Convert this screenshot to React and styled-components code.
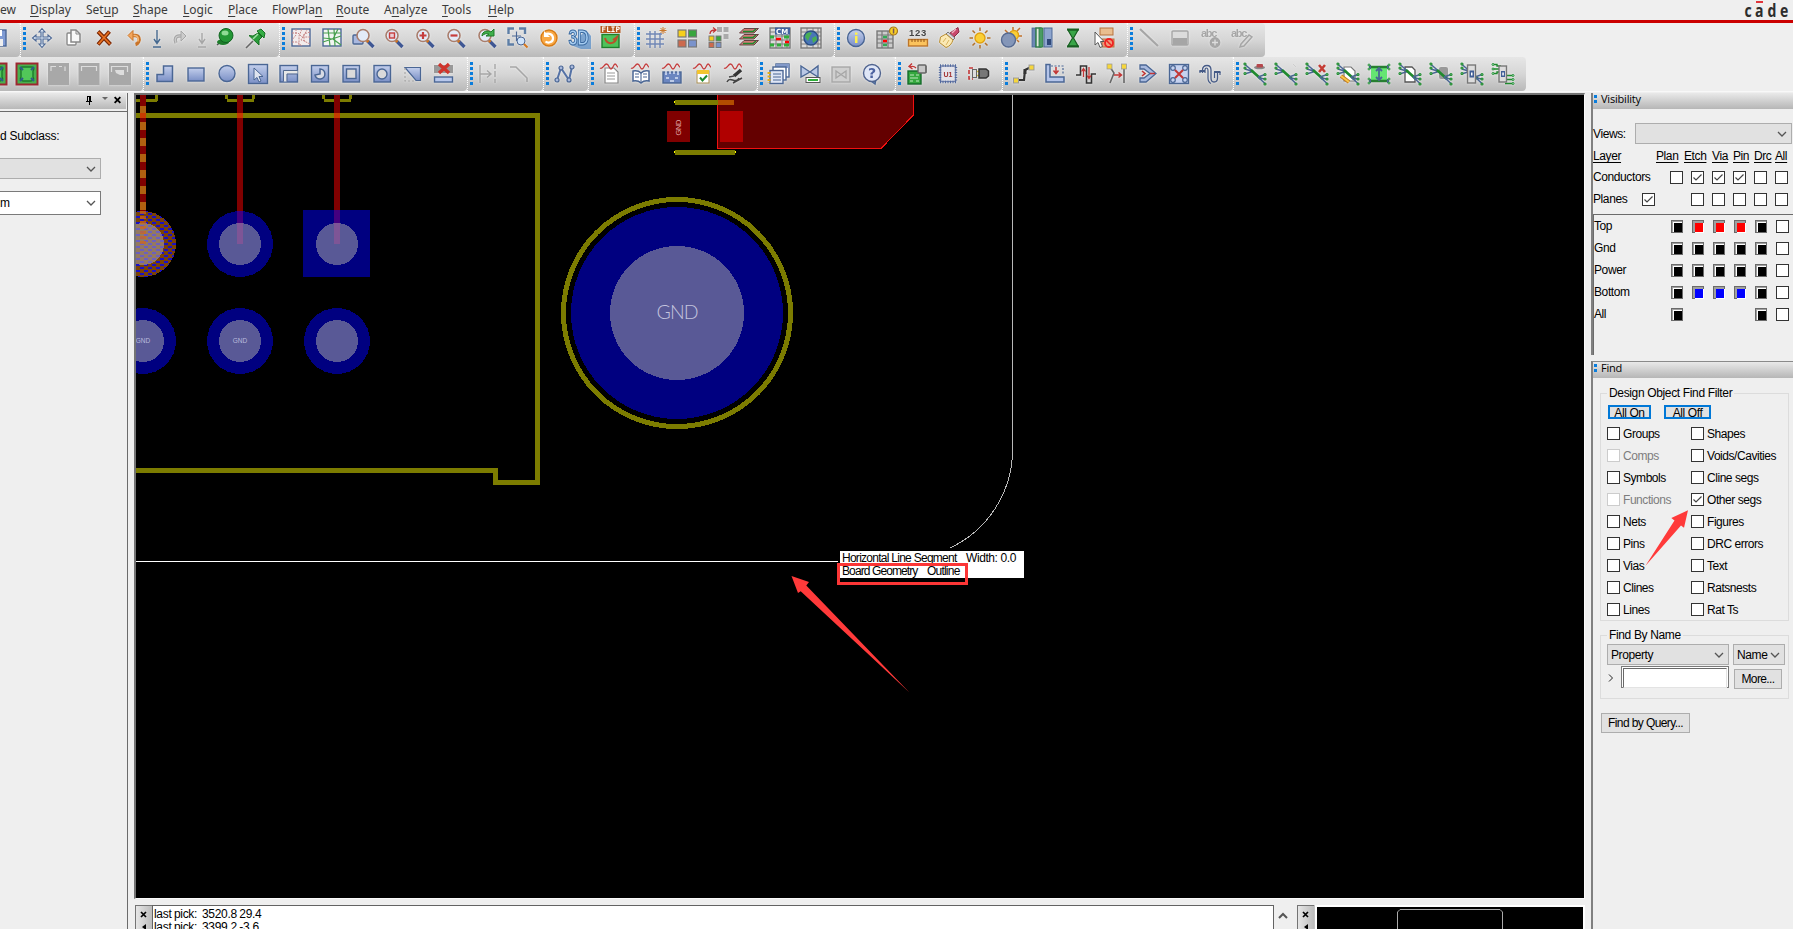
import React from "react";
import styled, { createGlobalStyle } from "styled-components";

const Global = createGlobalStyle`
  body { margin: 0; background: #efefef; overflow: hidden; }
  * { box-sizing: border-box; }
`;

const Page = styled.div`
  width: 1793px; height: 929px; overflow: hidden; background: #efefef;
  display: flex; flex-direction: column;
  font-family: "Liberation Sans", Arial, sans-serif; font-size: 12px; letter-spacing: -0.4px; color: #000;
`;
const MenuBar = styled.header`
  height: 23px; flex: none; display: flex; align-items: flex-start; border-bottom: 3px solid #cb0000;
  font-family: "Noto Sans", "Open Sans", sans-serif; font-size: 12px; letter-spacing: 0; color: #3b3b3b;
`;
const MenuItem = styled.span`
  flex: none; width: ${(p) => p.$w}px; margin-right: 14px; line-height: 20px; white-space: nowrap;
  u { text-underline-offset: 2px; text-decoration-thickness: 1px; }
`;
const Brand = styled.div`
  margin-left: auto; width: 49px; height: 20px; flex: none;
  svg { display: block; }
`;
const ToolRow = styled.div`
  height: ${(p) => p.$h}px; flex: none; display: flex; margin-left: ${(p) => p.$shift}px;
`;
const Group = styled.div`
  flex: none; height: 100%; display: flex; align-items: flex-start; padding: ${(p) => p.$top}px 8px 0 2px;
  border-left: 1px dotted #fff; border-radius: 0 4px 4px 0;
  background: linear-gradient(#e6e6e6, #d6d6d6 50%, #b9b9b9);
`;
const Grip = styled.i`
  width: 3px; height: 23px; margin-top: ${(p) => p.$top}px; flex: none;
  background: repeating-linear-gradient(#0a7ddc 0 3px, transparent 3px 5px);
`;
const Tool = styled.span`
  flex: none; width: ${(p) => (p.$narrow ? 14 : 31)}px; height: 24px; display: flex; justify-content: center; align-items: center;
  svg { flex: none; display: block; overflow: visible; filter: drop-shadow(0 0 1px rgba(255,255,255,.6)); }
`;
const Body = styled.main`
  flex: 1; min-height: 0; display: flex; border-top: 1px solid #f8f8f8; padding-top: 1px;
`;
const LeftPanel = styled.aside`
  width: 128px; flex: none; border-right: 1px solid #6b6b6b; display: flex; flex-direction: column;
`;
const LeftHead = styled.div`
  height: 16px; margin-right: 1px; flex: none; background: linear-gradient(#e9e9e9, #b8b8b8);
  display: flex; justify-content: flex-end; align-items: center; padding: 0 4px 2px 0;
`;
const LeftBody = styled.div`
  flex: 1; margin-top: 2px; border-top: 1px solid #6b6b6b; padding-top: 17px;
`;
const Caption = styled.div`height: 15px; line-height: 15px; margin-bottom: 14px; white-space: nowrap; text-align: right; width: 51px; letter-spacing: -0.25px;`;
const Combo = styled.div`
  width: ${(p) => p.$w}px; height: ${(p) => p.$h}px; flex: none;
  border: 1px solid ${(p) => (p.$white ? "#7a7a7a" : "#adadad")};
  background: ${(p) => (p.$white ? "#fff" : "#e1e1e1")};
  display: flex; align-items: center; justify-content: space-between; padding: 0 4px 0 3px;
  margin-left: ${(p) => p.$ml || 0}px; margin-bottom: ${(p) => p.$mb || 0}px;
`;
const Center = styled.section`width: 1451px; margin-left: 6px; flex: none; display: flex; flex-direction: column;`;
const CanvasFrame = styled.div`
  height: 806px; flex: none; border-style: solid; border-width: 2px 1px 1px 2px; border-color: #747474 #fbfbfb #fbfbfb #747474; background: #000;
  svg { display: block; }
`;
const Bottom = styled.div`flex: 1; margin-top: 6px; margin-left: 1px; display: flex; overflow: hidden;`;
const Strip = styled.div`
  width: 17px; flex: none; background: linear-gradient(90deg, #e6e6e6, #bcbcbc); border-top: 1px solid #747474; border-left: 1px solid #747474;
  svg { display: block; }
`;
const Log = styled.div`
  width: 1122px; flex: none; background: #fff; border: 1px solid #636363; border-width: 1px 1px 0 1px;
  padding: 2px 1px; line-height: 12.5px; font-size: 12px; white-space: pre; letter-spacing: -0.3px; word-spacing: -0.6px;
`;
const Scroll = styled.div`width: 23px; padding: 4px 0 0 4px; flex: none;`;
const Mini = styled.div`
  flex: none; width: 270px; margin-left: 1px; border: solid #fff; border-width: 2px 2px 0 2px; outline: 1px solid #c4c4c4; background: #000;
  svg { display: block; }
`;
const Right = styled.aside`flex: 1; margin-left: 6px; display: flex; flex-direction: column;`;
const Dock = styled.section`
  border-left: 2px solid #808080; height: ${(p) => p.$h}px; flex: none; margin-bottom: ${(p) => p.$mb || 0}px;
  border-top: ${(p) => (p.$line ? "1px solid #8a8a8a" : "none")};
`;
const DockHead = styled.div`
  height: 16px; background: linear-gradient(#e9e9e9, #b6b6b6); display: flex; align-items: flex-start; margin-bottom: ${(p) => p.$mb || 0}px;
  font-family: "Open Sans", "Noto Sans", sans-serif; font-size: 11px; letter-spacing: -0.2px; line-height: 12px; padding-left: 1px; overflow: hidden;
  svg { margin: 3px -7px 0 auto; flex: none; }
`;
const Dots = styled.i`
  width: 3px; height: 8px; margin: 2px 4px 0 0; flex: none;
  background: repeating-linear-gradient(#0a7ddc 0 3px, transparent 3px 5px);
`;
const ViewsRow = styled.div`display: flex; align-items: center; height: 21px; margin-top: 14px;`;
const ViewsLabel = styled.span`width: 42px; line-height: 14px;`;
const HeadRow = styled.div`
  display: grid; grid-template-columns: 63px 28px 28px 21px 21px 21px 20px; height: 15px; line-height: 16px; margin: 4px 0 3px 0;
  text-decoration: underline; text-underline-offset: 2px; white-space: nowrap;
`;
const CheckRow = styled.div`
  display: grid; grid-template-columns: ${(p) => p.$cols}; height: 22px; align-items: center; white-space: nowrap;
`;
const Layers = styled.div`
  margin-top: 4px; border-top: 1px solid #6b6b6b; border-left: 1px solid #6b6b6b; height: 141px;
`;
const Check = styled.span`
  width: 13px; height: 13px; flex: none; background: #fff; border: 1px solid ${(p) => (p.$off ? "#ccc" : "#333")};
  display: block;
  svg { display: block; }
`;
const Swatch = styled.span`
  width: 12px; height: 13px; border: 1px solid #6a6a6a; background: #a0a0a0; padding: 1px; margin-left: -1px;
  &::before { content: ""; display: block; width: 8px; height: 9px; border-left: 1px solid #fff; border-top: 1px solid #fff; background: #000; }
  ${(p) => p.$c && `
    padding: 2px 0 0 2px;
    &::before { width: 8px; height: 9px; border: 1px solid #fff; border-left: 0; border-top: 0; background: ${p.$c}; }
  `}
`;
const Box = styled.fieldset`
  border: 1px solid #dcdcdc; margin: ${(p) => p.$mt}px 0 0 7px; padding: 0; width: 189px; height: ${(p) => p.$h}px; min-width: 0;
`;
const Legend = styled.legend`padding: 0 2px; margin-left: 6px; line-height: 14px; height: 14px; white-space: nowrap; letter-spacing: -0.35px;`;
const Buttons = styled.div`display: flex; gap: 13px; margin: 5px 0 8px 7px;`;
const BlueButton = styled.span`
  width: ${(p) => p.$w}px; height: 14px; border: 2px solid #0078d7; background: #e1e1e1; line-height: 13px; text-align: center; overflow: hidden; white-space: nowrap;
`;
const Filters = styled.div`display: grid; grid-template-columns: 84px 1fr; grid-auto-rows: 22px; margin-left: 6px;`;
const Filter = styled.label`
  display: flex; align-items: flex-start; gap: 3px; line-height: 14px; white-space: nowrap; letter-spacing: -0.45px;
  color: ${(p) => (p.$off ? "#7d7d7d" : "#000")};
`;
const NameRow = styled.div`display: flex; align-items: flex-start; padding-left: 6px; margin-top: ${(p) => p.$mt}px;`;
const Prompt = styled.span`
  width: 14px; padding: 8px 0 0 1px;
  svg { display: block; }
`;
const Field = styled.span`width: 108px; height: 22px; background: #fff; border: 1px solid #7a7a7a; padding: 1px; margin-right: 5px;
  &::before { content: ""; display: block; height: 100%; border: 1px solid #e3e3e3; border-left-color: #696969; border-top-color: #696969; }
`;
const Button = styled.span`
  display: block; width: ${(p) => p.$w}px; height: 20px; margin: ${(p) => p.$m || 0}; border: 1px solid #adadad; background: #e1e1e1;
  text-align: center; line-height: 19px; white-space: nowrap; letter-spacing: -0.6px;
`;

/* ---------- icon helpers ---------- */
const B = "#4a6694", L = "#9fb2dc", G = "#1f8a2d", GY = "#a6a6a6", R = "#c23636", O = "#d5761d", K = "#444";
const P = ({ d, s = B, f = "none", w = 1.5, ...r }) => <path d={d} stroke={s} fill={f} strokeWidth={w} {...r} />;
const Rc = ({ x, y, w, h, f = L, s = "none", sw = 1.4, rx = 0 }) => <rect x={x} y={y} width={w} height={h} fill={f} stroke={s} strokeWidth={sw} rx={rx} />;
const Ci = ({ x, y, r, f = L, s = B, w = 1.4 }) => <circle cx={x} cy={y} r={r} fill={f} stroke={s} strokeWidth={w} />;
const T = ({ x, y, z = 8, f = K, children, ff = "DejaVu Sans" }) => <text x={x} y={y} fontSize={z} fill={f} fontWeight="bold" letterSpacing="0" fontFamily={ff}>{children}</text>;
const Wave = ({ y = 0 }) => <P d={`M1 ${5 + y}C4 ${7 + y} 5 ${1 + y} 7.500 ${1 + y}S10 ${6 + y} 12 ${6 + y}S14.500 ${1 + y} 16 ${1 + y}S18 ${4 + y} 19 ${4 + y}`} s="#c43c3c" w={1.3} />;
const Zoomer = ({ children }) => <g><P d="M13.500 14L19.500 20" s="#3f5794" w={3.4} /><P d="M12.500 13L14.500 15" s={O} w={2.6} /><Ci x={9} y={8.500} r={6} f="#e3ebf8" s="#a87d6c" w={1.6} />{children}</g>;
const Cell = ({ s = 1 }) => <g><Rc x={1} y={1} w={20} h={20} f="#dadada" s="#777" /><path d="M1 5H21M1 9H21M1 13H21M1 17H21M7 1V21M13 1V21M18 1V21" stroke="#777" strokeWidth={s} /></g>;
const Ends = () => <g><P d="M1 1.500L9 8.500L2 10.500M9 8.500L1 6" s={B} w={1.5} /><P d="M7 7L17 16" s={G} w={2.6} /><P d="M14 14L21 11.500M15 15L21 16M14 14L21 20.500" s={B} w={1.5} />
  {[[1, 1], [1, 5], [1, 10.500], [21, 11.500], [21, 16], [21, 21]].map(([x, y]) => <Ci key={`${x}${y}`} x={x} y={y} r={1} f="#cfe" s={G} w={1.200} />)}</g>;
const Sq = () => <Rc x={1.500} y={1.500} w={19} h={19} f="url(#bl)" s={B} />;

const icons = {
  save: <g><Rc x={3} y={3} w={17} h={16} f="#7f9bd4" s={B} /><Rc x={7} y={3} w={9} h={6} f="#fff" /><Rc x={6} y={12} w={11} h={7} f="#eee" /></g>,
  move: <P d="M11 1.500L14 5H12V10H17V8L20.500 11L17 14V12H12V17H14L11 20.500L8 17H10V12H5V14L1.500 11L5 8V10H10V5H8Z" f="#dde8f6" w={1.1} />,
  copy: <g><Rc x={5} y={6} w={9} h={12} f="#fff" s="#888" rx={1} /><P d="M9 3H14L18 7V15H9Z" s="#888" f="#f8f8f8" /><P d="M14 3V7H18" s="#888" w={1} /></g>,
  del: <g><P d="M5 4.500L17.500 17.500M16.500 4.500L5 17.500" s="#7c2a08" w={4} /><P d="M5.500 5L17 17M16 5L5.500 17" s="#e8701f" w={1.8} /></g>,
  undo: <g><P d="M6 8.500H11C15 8.500 16 12 14.500 15Q13.500 17 11.500 17.500" s="#c87328" w={3.4} /><P d="M6 8.500H11C14 8.500 15 12 13.500 14.500" s="#f5b877" w={1.6} /><P d="M9 3.500L4 8.500L9 13.500Z" s="#c87328" f="#f3a65d" w={1} /></g>,
  down: <g><P d="M7 3V16M4 12L7 16.500L10 12" s="#46698f" w={1.4} /><P d="M3 20H11" s="#46698f" /></g>,
  downG: <g><P d="M7 6V16M4 12L7 16.500L10 12" s={GY} w={1.4} /><P d="M3 20H11" s={GY} /></g>,
  redo: <g><P d="M7 16C5 12 7 9 10 9H14" s={GY} w={3.4} /><P d="M7 16C5 12 7 9 10 9H14" s="#ccc" w={1.2} /><P d="M12 4L17 9L12 14Z" s={GY} f="#ccc" w={1} /></g>,
  ball: <g><P d="M9 13L3 18" s="#555" w={1.5} /><ellipse cx="9" cy="15" rx="6" ry="3" fill="#1d7d2b" /><Ci x={12} y={8.500} r={7} f="#239735" s="#116020" w={1} /><ellipse cx="11" cy="6" rx="3.500" ry="2.500" fill="#8fdb95" /></g>,
  pin: <g><P d="M8 14L1 21" s="#666" w={1.6} /><P d="M12 4L19 11L20 6L16 2Z" s="#176f22" f="#34ad44" w={1} /><P d="M13 6L8 9L4 8.500L14 18L14 13L17 10Z" s="#176f22" f="#2a9d3a" w={1} /><P d="M13 7L8 12" s="#9fe0a5" /></g>,
  gridR: <g><Rc x={2} y={2} w={18} h={17} f="#f3ecec" s={B} /><P d="M2 6H8L12 10H20M6 2V8L2 13M12 2L9 9V19M20 5L14 7V14L20 17M2 15H7L12 19M15 14L11 13L17 3" s="#c78787" w={1} strokeDasharray="2 1" /></g>,
  gridG: <g><Rc x={2} y={2} w={18} h={17} f="#f1f5f1" s={B} /><P d="M2 6H20M2 15L20 9M7 2L9 19M17 2L12 12L20 18M2 11L12 12M13 2L14 19" s="#48a04e" w={1.2} /></g>,
  zFit: <g><Rc x={1} y={8} w={10} h={9} f="#a9b8df" s={B} rx={1} /><g transform="translate(2)"><Zoomer /></g></g>,
  zWin: <Zoomer><Rc x={6.500} y={6} w={5} h={5} f="#e9cfd6" s="#c63d3d" /></Zoomer>,
  zIn: <Zoomer><P d="M5.500 8.500H12.500M9 5V12" s="#c63d3d" w={2.2} /></Zoomer>,
  zOut: <Zoomer><P d="M5.500 8.500H12.500" s="#c63d3d" w={2.2} /></Zoomer>,
  zPrev: <Zoomer><P d="M6 9C6 4 12 3 15 5L18 2V9H10L13 7C10 6 8 7 6 9Z" s="#1d7b29" f="#41b04c" w={1} /></Zoomer>,
  zWorld: <g><P d="M1.500 7V1.500H7M12 1.500H18V7M1.500 12V17.500H7" w={2.4} s="#5d7ea6" /><P d="M5 9H14M9.500 4.500V14" w={1.2} /><Ci x={14} y={14} r={4} f="#cfe3fa" w={1} /><P d="M17 17L20.500 20.500" s={O} w={2} /></g>,
  refresh: <g><Ci x={11} y={11} r={8} f="#f9a946" s="#d77b16" /><P d="M7 7.500C11 5 15.500 8 15 12C14.500 15.500 10 16.500 7.500 14.500" s="#fff" w={2.2} /><P d="M6 4V10H12Z" s="none" f="#fff" /></g>,
  d3: <g><P d="M17 3L22 9V22H12L2 18Z" s="none" f="#4f87c4" opacity=".7" /><text x="-0.500" y="18" fontSize="22" fontWeight="bold" fill="#a6cdf2" stroke="#39689e" strokeWidth="1.100" textLength="20" lengthAdjust="spacingAndGlyphs" fontFamily="Liberation Sans">3D</text></g>,
  flip: <g><Rc x={0.500} y={-1} w={20} h={7} f="#b4581e" /><text x="1.500" y="5" fontSize="7.500" fontWeight="bold" fill="#fff" textLength="18" fontFamily="DejaVu Sans Mono">FLIP</text><Rc x={2} y={7.500} w={17} h={13} f="#4fc25a" s="#1f7f2c" /><P d="M5 11C7 18 15 18 17 10L13 13" s="#b9502a" w={2} /></g>,
  grid: <g><P d="M5 4V21M10 4V21M15 6V21M1 7H17M1 12H19M1 17H19" s="#7087b5" w={1.4} /><P d="M18 0V7M14.500 3.500H21.500M15.500 1L20.500 6M20.500 1L15.500 6" s="#c9772a" w={1} /></g>,
  quad: <g><Rc x={2} y={3} w={8} h={7} f="#f6cf1c" s="#777" sw={1.2} /><Rc x={12.500} y={3} w={8} h={7} f="#38a63e" s="#777" sw={1.2} /><Rc x={2} y={13} w={8} h={7} f="#cc6a4e" s="#777" sw={1.2} /><Rc x={12.500} y={13} w={8} h={7} f="#7a93cc" s="#777" sw={1.2} /></g>,
  quad2: <g><Rc x={10} y={0} w={5} h={5} f="#aaa" /><Rc x={16.500} y={0} w={5} h={5} f="#aaa" /><Rc x={16.500} y={7} w={5} h={5} f="#aaa" /><Rc x={2} y={9} w={5} h={5} f="#f6cf1c" s="#777" sw={1} /><Rc x={9} y={9} w={5} h={5} f="#38a63e" s="#777" sw={1} /><Rc x={2} y={15.500} w={5} h={5} f="#cc6a4e" s="#777" sw={1} /><Rc x={9} y={15.500} w={5} h={5} f="#7a93cc" s="#777" sw={1} /><P d="M3 7C3 4 5 3 8 3M6 0.500L9 3L6 5.500" s={R} w={1.3} /></g>,
  stack: <g>{[13.500, 7.500, 1.500].map((y) => <g key={y}><P d={`M6 ${y}H20.500L16 ${y + 4.500}H1.500Z`} s="#644" f="#d07a76" w={1} /><P d={`M5 ${y + 3}H15L18 ${y + 0.500}`} s={G} w={1.6} /></g>)}</g>,
  cm: <g><Cell s={0.9} /><Rc x={6} y={0.500} w={15} h={7} f="#40609e" /><T x={7} y={6.800} z={7} f="#fff">CM</T><P d="M1 10H5M15 10H20M1 18H5M8 18H12M15 18H20" s="#2fae3a" w={3} /><P d="M7 12H12M16 15H20" s="#f00" w={2.500} /></g>,
  globe: <g><Cell s={0.9} /><Ci x={11} y={11} r={7} f="#4976b8" s="#2c4f83" /><P d="M6 7Q9 4 12 6L10 9L8 14L5 10ZM12 11L16 9L17 13L13 16Z" s="none" f="#48ae53" /></g>,
  info: <g><Ci x={11} y={11} r={8.500} f="url(#bl)" s={B} /><Rc x={10} y={9} w={2.500} h={7} f="#fff04a" /><Rc x={10} y={5.500} w={2.500} h={2.300} f="#fff04a" /></g>,
  table: <g><Rc x={1} y={4} w={16} h={17} f="#ccc" s="#777" /><P d="M1 8H17M1 12H17M1 16H17M6 4V21M12 4V21" s="#777" w={1.2} /><P d="M7 14H11" s="#f00" w={2.5} /><P d="M7 18H11M7 10H11" s="#3a5" w={2.5} /><Ci x={17.500} y={4} r={4} f="#f7cf25" s="#a8771c" w={1.2} /><Rc x={16.800} y={1.500} w={1.500} h={5} f="#755" /></g>,
  ruler: <g><text x="2" y="9" fontSize="9.500" fill="#444" fontWeight="bold" textLength="17" fontFamily="Liberation Sans">123</text><Rc x={1.500} y={12.500} w={19} h={6.500} f="#fbc35d" s="#bd762b" /><P d="M5 12V15M8 12V15M11 12V15M14 12V15M17 12V15" s="#915417" w={1} /></g>,
  brush: <g><P d="M20 0.500L12 6L15 11L21 5Z" s="#8b2a44" f="#c8486b" w={1} /><P d="M18 2L14 6" s="#f0b0c0" w={1.5} /><P d="M10 5L17 11L15 13L8 7Z" s="#777" f="#d8d8e0" w={1} /><P d="M8 7L15 13Q13 19 8 20.500L1.500 15.500L2.500 10Z" s="#b78b2f" f="#fbe9b4" w={1} /><P d="M8 11L5 15M11 13L8 18" s="#d8b560" w={1} /></g>,
  sun: <g><P d="M11 0.500V4M11 18V21.500M0.500 11H4M18 11H21.500M3.500 3.500L6 6M16 16L18.500 18.500M3.500 18.500L6 16M16 6L18.500 3.500" s="#b2702a" /><Ci x={11} y={11} r={5} f="#fbcf35" s="#e0a012" /></g>,
  sunMoon: <g><P d="M13 0V3M5 3L8 6M20 1L17 4M22 9H18M19 15L17 13" s="#c0702a" /><Ci x={14} y={8} r={4.500} f="#fbcf35" s="#e0a012" /><Ci x={8.500} y={13} r={7} f="#8496b8" s="#566a91" /></g>,
  books: <g><Rc x={1} y={1} w={4} h={19} f="#6d88b5" s={B} sw={0.8} /><Rc x={5} y={1} w={5} h={19} f="#dfe9df" s="#2c7b45" /><Rc x={8} y={1} w={4} h={19} f="#4a9c62" s="#2c7b45" sw={0.8} /><Rc x={13} y={1} w={8} h={19} f="#8fa6cf" s={B} sw={1} /><Rc x={16} y={12} w={4} h={6} f="#2f4879" /></g>,
  hour: <g><P d="M6 3H16L11.500 11L16 19H6L10.500 11Z" s="#185f22" f="#39a648" w={1.2} /><P d="M5 2.500H17M5 19.500H17" s="#185f22" w={2.2} /></g>,
  arrowBox: <g><Rc x={7} y={1} w={13} h={7} f="#e9be8f" s="#b4713b" sw={1} /><Rc x={9} y={12} w={12} h={8} f="#f09a7a" s="#b4713b" sw={1} /><Ci x={16} y={16} r={4} f="none" s="#e22" w={1.8} /><P d="M13 13L19 19" s="#e22" /><P d="M2 5V18L5 15.500L7 20.500L9.500 19.500L7.500 14.500H11Z" s="#555" f="#fff" w={1} /></g>,
  line: <P d="M2 2L20 19" s={GY} w={2.2} />,
  boxG: <g><Rc x={3} y={4} w={16} h={14} f="#dcdcdc" s={GY} rx={1} /><Rc x={4} y={11} w={14} h={7} f={GY} /></g>,
  abcPlus: <g><text x="1" y="9.500" fontSize="11" fill={GY} textLength="16" fontWeight="bold" fontFamily="Liberation Sans">abc</text><Ci x={15} y={15.500} r={4.700} f={GY} s={GY} /><P d="M12 15.500H18M15 12.500V18.500" s="#ddd" w={1.3} /></g>,
  abcPen: <g><text x="0" y="9.500" fontSize="11" fill={GY} textLength="16" fontWeight="bold" fontFamily="Liberation Sans">abc</text><P d="M10 17L18 8L21 10L13 19L9 20Z" s={GY} f="#d8d8d8" /></g>,
  pcb: <g><Rc x={0.500} y={0.500} w={21} h={21} f="#48b04f" s="#9c2730" sw={2} /><P d="M5 7Q3 5 6 4H16Q19 5 17 8V14Q19 17 15 18H7Q3 17 5 14Z" s="#1d7b2c" f="#52c759" w={1.4} /><P d="M4 4L7 7M18 4L15 7M4 18L7 15M18 18L15 15" s="#2f5c88" w={2} /></g>,
  g1: <g><Rc x={1} y={0} w={21} h={22} f="#a8a8a8" /><P d="M4 8V3.500H9M12 3.500H15M18 3.500V8" s="#ddd" w={1.2} /></g>,
  g2: <g><Rc x={0.500} y={0} w={21} h={22} f="#a8a8a8" /><P d="M3.500 8V3.500H18.500V8" s="#ddd" w={1.2} /></g>,
  g3: <g><Rc x={0} y={0} w={22} h={22} f="#a8a8a8" /><P d="M2.500 9V3.500H18.500V9" s="#ddd" w={1.2} /><P d="M6 7H15V12H11L7 10Z" s="none" f="#ddd" /></g>,
  shL: <P d="M9.500 3H18.500V18.500H3V11.500H9.500Z" f="url(#bl)" />,
  shR: <Rc x={3} y={5} w={16} h={13} f="url(#bl)" s={B} />,
  shC: <Ci x={11} y={10.500} r={8} f="url(#bl)" />,
  shSel: <g><Sq /><P d="M7 5V17L10 14.500L12 19L14 18L12 13.500H16Z" s={B} f="#dfe4ef" w={1} /></g>,
  shCorner: <g><Rc x={2} y={2.500} w={17.500} h={16.500} f="url(#bl)" s={B} /><P d="M7.200 18.500V9.200H19.500" s="#e7e7e7" w={3} /><P d="M5.500 18.500V7.500H19.500M9 18.500V11H19.500" s="#53698f" w={1} /></g>,
  shPie: <g><Rc x={2.500} y={2.500} w={17} h={16.500} f="url(#bl)" s={B} /><P d="M6 12A5 5 0 1 0 11 6V11Z" s={B} f="#d8dbe4" /></g>,
  shSq: <g><Rc x={3} y={2.500} w={16.500} h={16.500} f="url(#bl)" s={B} /><Rc x={6.500} y={6} w={9.500} h={9.500} f="#dadada" s={B} /></g>,
  shO: <g><Rc x={3} y={2.500} w={16.500} h={16.500} f="url(#bl)" s={B} /><Ci x={11} y={11} r={5} f="#dadada" /></g>,
  shCut: <g><P d="M3 4.500H18.500V17.500H14Z" f="url(#bl)" w={1.2} /><P d="M3 5V18H14" s={GY} w={1.2} strokeDasharray="2 2" /></g>,
  shDel: <g><Rc x={1} y={2} w={19} h={8} f="#999" /><P d="M6 1L16 10M16 1L6 10" s="#d0342c" w={3.4} /><Rc x={1.500} y={14} w={18} h={5} f="#b8c8ec" s={B} /></g>,
  ext: <P d="M2 2V20M2 11H12M9 7.500L13 11L9 14.500M17 1V6M17 8V14M17 16V20" s={GY} w={1.4} />,
  line2: <g><P d="M1 4H7L18 15V19" s={GY} w={1.6} /></g>,
  net: <g><P d="M3 17L7 5L15 17L18 4" s="#5572a6" w={2} />{[[3, 17], [7, 5], [15, 17], [18, 4]].map(([x, y]) => <Ci key={x} x={x} y={y} r={2} f="#a9b9dc" w={1.2} />)}</g>,
  wDoc: <g><P d="M6 5H15L19 9V20H6Z" s="#888" f="#fff" w={1.2} /><P d="M8 10H16M8 13H16M8 16H16" s="#999" w={1.1} /><Wave /></g>,
  wBook: <g><P d="M3 8Q8 7 11 10Q14 7 19 8V18Q14 17 11 20Q8 17 3 18Z" s={B} f="#fff" /><P d="M11 10V20M5 11H9M5 14H9M13 11H17M13 14H17" w={1.1} /><Wave /></g>,
  wChip: <g><Rc x={2} y={9} w={18} h={11} f="#6b86c0" s={B} /><P d="M5 8V12M9 8V11M13 8V11M17 8V12M5 15H8M14 15H17M9 18H13" s="#d9e2f3" /><Wave /></g>,
  wCheck: <g><Rc x={5} y={8} w={12} h={12} f="#fff" s="#a98e50" sw={1} /><Rc x={5} y={7} w={12} h={4} f="#f3c52d" /><P d="M8 14.500L10.500 17.500L15 12.500" s={G} w={2} /><Wave /></g>,
  wPen: <g><P d="M18 7L11 13" s="#333" w={3.6} /><P d="M11 13L6 14M4 19C7 12 12 22 16 15M10 20L19 15" s="#444" w={1.5} /><Wave /></g>,
  sheets: <g><Rc x={8} y={1} w={13} h={13} f="#fff" s={B} /><Rc x={8} y={1} w={13} h={4} f="#8299c9" /><Rc x={5} y={4} w={13} h={13} f="#fff" s={B} /><Rc x={2} y={7.500} w={13} h={13} f="#dfe6f5" s={B} /><P d="M5 11H13M5 14H13M5 17H13" s={B} w={1} /><P d="M1 9V20" s="#e3ae17" w={3} strokeDasharray="2 1.500" /></g>,
  bow: <g><P d="M2 3L11 9L19 3V14L11 9L2 14Z" f="#b9c8e6" w={1.4} /><Rc x={7} y={14.500} w={14} h={5} f="#fff" s="#555" sw={1} /><Rc x={9} y={16} w={10} h={2} f="#2fae3a" /></g>,
  bowG: <g><Rc x={2} y={4} w={18} h={15} f="#cfcfcf" s={GY} /><P d="M6 8V15L11 11.500L16 8V15L11 11.500Z" s={GY} w={1.3} /></g>,
  help: <g><P d="M10 18L14 21L15 16Z" f="#8fa3d0" s={B} /><Ci x={11} y={10} r={8.500} f="#dfe6f6" s="#50648f" /><T x={7} y={15} z={14} f="#4c63a1">?</T></g>,
  chipG: <g><Rc x={2} y={8} w={13} h={13} f="#35a83f" s="#14692a" /><P d="M4 12H8M10 12H13M4 15H12M4 18H7M10 18H13" s="#bfe8c0" w={1.2} /><Rc x={12} y={2} w={8} h={8} f="#c7c7c7" s="#666" rx={1} /><P d="M20 3V10" s="#666" w={1.2} /><P d="M10 5C8 3 6 3 4 4M6 0.500L3 3.500L6.500 6" s={R} w={1.4} /></g>,
  u1: <g><Rc x={3.500} y={3} w={15} h={15.500} f="#e3e3ea" s="#7180ab" sw={1.4} /><rect x="3" y="2.500" width="16" height="16.500" fill="none" stroke="#51699d" strokeWidth="2.400" strokeDasharray="1 1.500" /><T x={6.500} y={14} z={7} f="#a33131" ff="Liberation Sans">U1</T></g>,
  plug: <g><P d="M5 5H1V16H5" s={R} w={1.6} strokeDasharray="4 2" /><P d="M6 8.500H12M6 12.500H12" s="#d8c13a" w={1.6} /><Rc x={4.500} y={6.500} w={4} h={8} f="#ddd" s="#666" sw={1} /><P d="M11 6H18L20.500 8V13L18 15H11Z" s="#333" f="#777" /></g>,
  route: <g><P d="M5 17H11L12 7L18 4" s="#333" w={2.2} /><Rc x={0.500} y={15} w={5} h={5} f="#f6d63b" s="#999" sw={1} /><Rc x={16} y={2} w={5} h={5} f="#f6d63b" s="#999" sw={1} /><Rc x={10.500} y={6} w={3} h={5} f="#333" /></g>,
  slide: <g><P d="M2 1.500H6V14H20V19H2Z" f="#b5c5ea" /><P d="M7 3H19V12" s={B} w={1.200} strokeDasharray="2 1.500" /><P d="M12 4V10M9.500 7.500L12 10.500L14.500 7.500" s={R} /></g>,
  tune: <g><P d="M1 12H5.500V3H11.500V20H16.500V11H21" s="#333" w={1.6} /><P d="M8.500 14V6M6.500 8.500L8.500 5.500L10.500 8.500M14 4V15M12 12.500L14 15.500L16 12.500" s={R} w={1.3} /></g>,
  spread: <g><P d="M4 4L8 10L4 20M18 4V20" s="#666" w={1.6} /><Rc x={1} y={1} w={5} h={5} f="#f6d63b" s="#999" sw={0.8} /><Rc x={15.500} y={1} w={5} h={5} f="#f6d63b" s="#999" sw={0.8} /><P d="M8 12H15M12.500 9.500L15.500 12L12.500 14.500" s={R} /></g>,
  miter: <g><P d="M3 2H9L19 10.500L9 19H3V15H7L13 10.500L7 6H3Z" f="#a8badf" w={1.3} /><P d="M5 8L8 10.500L5 13M13 10.500H18" s={R} w={1.6} /></g>,
  fan: <g><Rc x={1.500} y={1.500} w={19} h={19} f="#c6d2ef" s={B} />{[[5, 5], [17, 5], [5, 17], [17, 17]].map(([x, y]) => <Ci key={`${x}-${y}`} x={x} y={y} r={2.3} f="none" w={1.200} />)}<P d="M7 7L15 15M15 7L7 15" s={R} w={2} /></g>,
  snake: <g><P d="M3.500 10V7Q3.500 2.500 8 2.500Q12 2.500 12 7V15Q12 19 15 19Q18.500 19 18.500 15V9" s="#455a86" w={1.300} /><P d="M7 10V7Q7 5.500 8 5.500Q9 5.500 9 7V16Q9 21.500 15 21.500" s="#455a86" w={1.200} opacity="0" /><P d="M1 10V7.500M6 10V7.500Q6 5 7.500 5Q9 5 9 8V15Q9 19 12 20.500M15.500 15V9M21 12V9" s="#455a86" w={1.200} /><P d="M0.500 8H6M15 9H21.500" s="#455a86" w={1.8} /></g>,
  n1: <g><Ends /><ellipse cx="15.500" cy="4.500" rx="5.500" ry="1.800" fill="#888" /><Rc x={12.500} y={1} w={6.500} h={3.500} f="#b5474c" rx={1} /></g>,
  n2: <g><Ends /><P d="M18 1L21 4" s="#ccc" w={1} /></g>,
  n3: <g><Ends /><P d="M13 2L19 9M19 2L13 9" s="#c43d35" w={2.600} /></g>,
  n4: <g><P d="M7 4H14L18 8V18H7Z" s="#777" f="#fff" w={1.2} /><Ends /><P d="M4 13L12 19" s="#c67b1e" w={4} /><P d="M4 13L12 19" s="#f8c74c" w={2} /></g>,
  n5: <g><Rc x={3} y={3} w={16} h={16} f="#65e672" /><P d="M2 4H20M2 18H20" s="#267f31" w={2.6} /><P d="M2 2V6M20 2V6M2 16V20M20 16V20" s={B} w={2} /><P d="M11 5V17M8 8L11 5L14 8M8 14L11 17L14 14" s={B} w={1.8} />{[[1, 2], [1, 6], [21, 2], [21, 6], [1, 16], [1, 20], [21, 16], [21, 20]].map(([x, y]) => <Ci key={`${x}-${y}`} x={x} y={y} r={1} f="#cfe" s={G} w={1} />)}</g>,
  n6: <g><P d="M6 4H13L16 7V19H6Z" s="#555" f="#fff" w={1.3} /><Ends /></g>,
  n7: <g><Rc x={9} y={4} w={9} h={12} f="#999" rx={2} /><Ends /></g>,
  n8: <g><Ends /><Rc x={6.500} y={2} w={8} h={18} f="#ddd" s="#777" /><Rc x={8.500} y={7.500} w={4.500} h={7} f="#405e96" /><Rc x={10} y={9.500} w={1.500} h={3} f="#fff" /></g>,
  n9: <g><P d="M1 1.500H5V3H9M1 6H9M1 10.500H5V9H9M13 12.500H21M13 16.500H21M13 20.500H21" s={G} w={1.400} />{[[1, 1.5], [1, 6], [1, 10.5], [21, 12.5], [21, 16.5], [21, 20.5]].map(([x, y]) => <Ci key={`${x}-${y}`} x={x} y={y} r={1} f="#cfe" s={G} w={1} />)}<Rc x={7} y={3} w={7.500} h={16} f="#ddd" s="#777" /><Rc x={9} y={8} w={4} h={6} f="#405e96" /><Rc x={10.300} y={9.500} w={1.500} h={3} f="#fff" /></g>,
};

const ToolIcon = ({ name }) => {
  const narrow = name === "down" || name === "downG";
  return (
    <Tool $narrow={narrow}>
      <svg width={narrow ? 14 : 22} height="22" viewBox={narrow ? "0 0 14 22" : "0 0 22 22"}>{icons[name]}</svg>
    </Tool>
  );
};
const row1 = ["save", "move copy del undo down redo downG ball pin", "gridR gridG zFit zWin zIn zOut zPrev zWorld refresh d3 flip", "grid quad quad2 stack cm globe", "info table ruler brush sun sunMoon books hour arrowBox", "line boxG abcPlus abcPen"];
const row2 = ["pcb pcb g1 g2 g3", "shL shR shC shSel shCorner shPie shSq shO shCut shDel", "ext line2", "net", "wDoc wBook wChip wCheck wPen", "sheets bow bowG help", "chipG u1 plug", "route slide tune spread miter fan snake", "n1 n2 n3 n4 n5 n6 n7 n8 n9"];
const Toolbar = ({ groups, h, shift, top, grip }) => (
  <ToolRow $h={h} $shift={shift}>
    {groups.map((g) => (
      <Group key={g} $top={top}>
        <Grip $top={grip} />
        {g.split(" ").map((n, i) => <ToolIcon key={i} name={n} />)}
      </Group>
    ))}
  </ToolRow>
);

const Caret = ({ up }) => <svg width="10" height="8" viewBox="0 0 10 8"><path d={up ? "M1 6L5 2L9 6" : "M1 2L5 6L9 2"} fill="none" stroke="#555" strokeWidth={up ? 2 : 1.3} /></svg>;
const PinIcon = () => <svg width="8" height="11" viewBox="0 0 8 11" shapeRendering="crispEdges"><path d="M2 1.500H5.500V6M2.500 1V6M4.500 1V6M1 6.500H7M4 7V10" fill="none" stroke="#000" /></svg>;
const Tick = () => <svg width="11" height="11" viewBox="0 0 11 11"><path d="M1.500 5.500L4 8L9.500 2.500" fill="none" stroke="#444" strokeWidth="1.200" /></svg>;
const CheckBox = ({ on, off }) => <Check $off={off}>{on ? <Tick /> : null}</Check>;
const StripMarks = () => <svg width="16" height="24" viewBox="0 0 16 24"><path d="M5 6L10 11M10 6L5 11" stroke="#000" strokeWidth="1.700" /><path d="M10 18V24L6 21Z" fill="#000" /></svg>;

const Pad = ({ x, y, label }) => (
  <g>
    <circle cx={x} cy={y} r="33" fill="#000080" />
    <circle cx={x} cy={y} r="21" fill="#595996" />
    {label && <text x={x} y={y + 2} fontSize="6.500" fill="#b9b9dc" textAnchor="middle" letterSpacing="0">GND</text>}
  </g>
);

const Board = () => (
  <svg width="1448" height="803" viewBox="136 95 1448 803" shapeRendering="crispEdges" fontFamily="Liberation Sans, Arial, sans-serif">
    <defs>
      <pattern id="hatch" width="8" height="6" patternUnits="userSpaceOnUse">
        <rect width="8" height="6" fill="#7a4205" />
        <path d="M0 1H4M4 4H8" stroke="#1a10c8" strokeWidth="1.600" />
      </pattern>
      <pattern id="hatchIn" width="8" height="6" patternUnits="userSpaceOnUse">
        <rect width="8" height="6" fill="#94795f" />
        <path d="M0 1H4M4 4H8" stroke="#6a5fc0" strokeWidth="1.600" />
      </pattern>
    </defs>
    <g fill="none" stroke="#7c7c00">
      <path d="M136 115.500H537.500V482H495V470.500H136" strokeWidth="5" />
      <path d="M136 100.500H157M156.500 95V101M226.500 95V99M227 100.500H254M253.500 95V99M323.500 95V99M324 100.500H351M350.500 95V99" strokeWidth="3" />
      <circle cx="677" cy="313" r="113.500" strokeWidth="5" />
    </g>
    <circle cx="143" cy="244" r="33" fill="url(#hatch)" />
    <circle cx="143" cy="244" r="21" fill="url(#hatchIn)" />
    <Pad x={240} y={244} />
    <rect x="303" y="210" width="67" height="67" fill="#000080" />
    <circle cx="337" cy="244" r="21" fill="#595996" />
    <Pad x={143} y={341} label />
    <Pad x={240} y={341} label />
    <Pad x={337} y={341} />
    <path d="M143 95V211" stroke="#800000" strokeWidth="6" />
    <path d="M143 106V211" stroke="#b06010" strokeWidth="6" strokeDasharray="8 8" />
    <path d="M143 211V244" stroke="#d0671a" strokeWidth="6" strokeDasharray="3 2" opacity=".7" />
    <path d="M240 95V211M337 95V210" stroke="#800000" strokeWidth="6" />
    <path d="M240 211V223M337 210V223" stroke="#450080" strokeWidth="6" />
    <path d="M240 223V244M337 223V244" stroke="#7e5596" strokeWidth="6" />
    <path d="M143 113V118M240 113V118M337 113V118" stroke="#c63c00" strokeWidth="6" />
    <circle cx="677" cy="313" r="106" fill="#000080" />
    <circle cx="677" cy="313" r="67" fill="#595996" />
    <text x="656.500" y="319" fontSize="19.500" fill="#c4c4de" fontFamily="Lato, Liberation Sans" fontWeight="300" letterSpacing="0" textLength="42">GND</text>
    <path d="M717.500 95V148.500H881L913.500 115V95" fill="#640000" stroke="#f01010" />
    <rect x="675" y="100" width="43" height="5" fill="#7c7c00" />
    <rect x="718" y="100" width="16" height="5" fill="#b24c00" />
    <rect x="675" y="150" width="60" height="5" fill="#7c7c00" />
    <path d="M674.500 101V103M674.500 151V153M735.500 151V153" stroke="#ff0" />
    <rect x="667" y="111" width="23" height="31" fill="#800000" />
    <rect x="720" y="111" width="23" height="31" fill="#b00000" />
    <text transform="translate(681 135.500) rotate(-90)" fontSize="7.500" fill="#e0a8a8" letterSpacing="0" textLength="16">GND</text>
    <path d="M1012.500 95V452A109 109 0 0 1 950 548" fill="none" stroke="#b9b9b9" />
    <rect x="136" y="561" width="702" height="1" fill="#fff" />
    <g>
      <rect x="840" y="551" width="184" height="27" fill="#fff" />
      <g shapeRendering="auto" fontSize="12" fill="#000" letterSpacing="-0.300">
        <text x="842" y="562" textLength="115">Horizontal Line Segment</text>
        <text x="966" y="562" textLength="50">Width: 0.0</text>
        <text x="842" y="575" textLength="76">Board Geometry</text>
        <text x="927" y="575" textLength="33">Outline</text>
      </g>
      <rect x="838.500" y="564.500" width="128" height="19" fill="none" stroke="#fb3636" strokeWidth="3" />
    </g>
    <path shapeRendering="auto" d="M791.500 576L809 582L806.300 585.500L909.700 692.700L800.700 591.300L798 593Z" fill="#ff3a3a" />
  </svg>
);

const columns = ["Layer", "Plan", "Etch", "Via", "Pin", "Drc", "All"];
const layers = [["Top", "#f00"], ["Gnd", ""], ["Power", ""], ["Bottom", "#00f"]];
const filters = ["Groups", "Shapes", "Comps", "Voids/Cavities", "Symbols", "Cline segs", "Functions", "Other segs", "Nets", "Figures", "Pins", "DRC errors", "Vias", "Text", "Clines", "Ratsnests", "Lines", "Rat Ts"];

const Callout = styled.svg`position: absolute; left: 1640px; top: 505px; pointer-events: none;`;
const SharedDefs = styled.svg`position: absolute;`;

export default function App() {
  return (
    <Page>
      <Global />
      <SharedDefs width="0" height="0">
        <defs><linearGradient id="bl" x1="0" y1="0" x2="0" y2="1"><stop offset="0" stopColor="#c3cfec" /><stop offset="1" stopColor="#7b90c6" /></linearGradient></defs>
      </SharedDefs>
      <MenuBar>
        <MenuItem $w={16}>ew</MenuItem>
        <MenuItem $w={42}><u>D</u>isplay</MenuItem>
        <MenuItem $w={33}>Set<u>u</u>p</MenuItem>
        <MenuItem $w={36}><u>S</u>hape</MenuItem>
        <MenuItem $w={31}><u>L</u>ogic</MenuItem>
        <MenuItem $w={30}><u>P</u>lace</MenuItem>
        <MenuItem $w={50}>FlowPla<u>n</u></MenuItem>
        <MenuItem $w={34}><u>R</u>oute</MenuItem>
        <MenuItem $w={44}>A<u>n</u>alyze</MenuItem>
        <MenuItem $w={32}><u>T</u>ools</MenuItem>
        <MenuItem $w={28}><u>H</u>elp</MenuItem>
        <Brand>
          <svg width="49" height="20" viewBox="0 0 49 20">
            <text transform="scale(.76 1)" y="16.500" x="0.800 14.500 31 47.500" fontSize="18.500" fontWeight="bold" fill="#2d2d2d" fontFamily="Open Sans">cade</text>
            <rect x="12" y="1" width="7" height="2" fill="#e0353c" />
          </svg>
        </Brand>
      </MenuBar>
      <Toolbar groups={row1} h={34} shift={-25} top={3} grip={1} />
      <Toolbar groups={row2} h={34} shift={-26} top={5} grip={0} />
      <Body>
        <LeftPanel>
          <LeftHead>
            <PinIcon />
            <svg width="20" height="8" viewBox="0 0 20 8"><path d="M9 1H15L12 4Z" fill="#666" /></svg>
            <svg width="9" height="8" viewBox="0 0 7 7"><path d="M1 1L6 6M6 1L1 6" stroke="#000" strokeWidth="1.600" /></svg>
          </LeftHead>
          <LeftBody>
            <Caption>d Subclass:</Caption>
            <Combo $w={103} $ml={-2} $h={21} $mb={12}><span /><Caret /></Combo>
            <Combo $w={105} $ml={-8 + 4} $h={24} $white><span>m</span><Caret /></Combo>
          </LeftBody>
        </LeftPanel>
        <Center>
          <CanvasFrame><Board /></CanvasFrame>
          <Bottom>
            <Strip><StripMarks /></Strip>
            <Log>{"last pick:  3520.8 29.4\nlast pick:  3399.2 -3.6"}</Log>
            <Scroll><Caret up /></Scroll>
            <Strip><StripMarks /></Strip>
            <Mini><svg width="266" height="24" viewBox="0 0 266 24"><path d="M80.500 24V5L83 2.500H183L185.500 5V24" fill="none" stroke="#aaa" /></svg></Mini>
          </Bottom>
        </Center>
        <Right>
          <Dock $h={262} $mb={6}>
            <DockHead><Dots />Visibility<PinIcon /></DockHead>
            <ViewsRow><ViewsLabel>Views:</ViewsLabel><Combo $w={157} $h={21}><span /><Caret /></Combo></ViewsRow>
            <HeadRow>{columns.map((c) => <span key={c}>{c}</span>)}</HeadRow>
            <CheckRow $cols="77px repeat(6, 21px)"><span>Conductors</span>{[0, 1, 1, 1, 0, 0].map((v, i) => <CheckBox key={i} on={v} />)}</CheckRow>
            <CheckRow $cols="49px 49px repeat(5, 21px)"><span>Planes</span>{[1, 0, 0, 0, 0, 0].map((v, i) => <CheckBox key={i} on={v} />)}</CheckRow>
            <Layers>
              {layers.map(([n, c]) => (
                <CheckRow key={n} $cols="78px repeat(4, 21px) 20px 20px">
                  <span>{n}</span><Swatch /><Swatch $c={c} /><Swatch $c={c} /><Swatch $c={c} /><Swatch /><CheckBox />
                </CheckRow>
              ))}
              <CheckRow $cols="78px 84px 20px 20px"><span>All</span><Swatch /><Swatch /><CheckBox /></CheckRow>
            </Layers>
          </Dock>
          <Dock $h={568} $line>
            <DockHead><Dots />Find<PinIcon /></DockHead>
            <Box $h={235} $mt={8}>
              <Legend>Design Object Find Filter</Legend>
              <Buttons><BlueButton $w={43}>All On</BlueButton><BlueButton $w={47}>All Off</BlueButton></Buttons>
              <Filters>
                {filters.map((f) => {
                  const off = f === "Comps" || f === "Functions";
                  return <Filter key={f} $off={off}><CheckBox off={off} on={f === "Other segs"} />{f}</Filter>;
                })}
              </Filters>
            </Box>
            <Box $h={71} $mt={7}>
              <Legend>Find By Name</Legend>
              <NameRow $mt={2}><Combo $w={122} $h={21}>Property<Caret /></Combo><Combo $w={52} $h={21} $ml={4}>Name<Caret /></Combo></NameRow>
              <NameRow $mt={1}><Prompt><svg width="6" height="8" viewBox="0 0 6 8"><path d="M1 0.500L4.500 4L1 7.500" fill="none" stroke="#222" /></svg></Prompt><Field /><Button $w={48} $m="3px 0 0">More...</Button></NameRow>
            </Box>
            <Button $w={89} $m="14px 0 0 8px">Find by Query...</Button>
          </Dock>
        </Right>
      </Body>
      <Callout width="60" height="64" viewBox="1640 505 60 64">
        <path d="M1688 510.300L1684 527.700L1681 525.500L1645.300 566L1674.500 520.500L1671.300 518Z" fill="#ff3a3a" />
      </Callout>
    </Page>
  );
}
